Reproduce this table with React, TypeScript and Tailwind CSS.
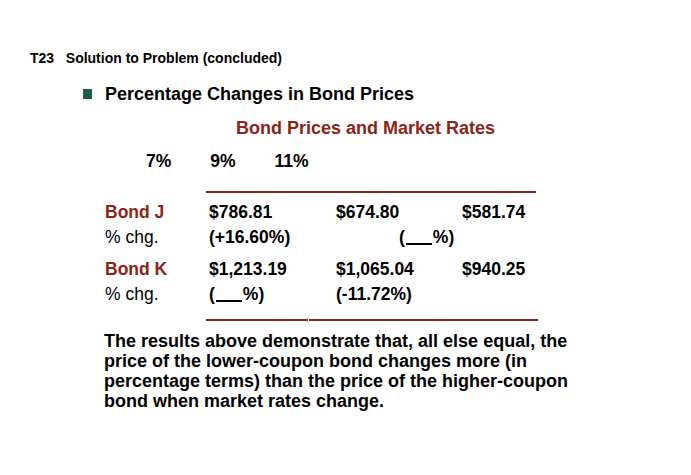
function Blank() {
  return <span className="inline-block w-[26px] h-[2px] bg-black align-[-2px] mx-[1px]" />;
}

export default function App() {
  const red = "text-[#8c2518]";
  return (
    <div className="w-[691px] h-[475px] bg-white text-black font-['Liberation_Sans',Arial,sans-serif] overflow-hidden">
      <div className="pt-[49px] pl-[30px] text-[14px] leading-[18px] font-bold whitespace-nowrap">
        T23&nbsp;&nbsp;&nbsp;Solution to Problem (concluded)
      </div>
      <div className="mt-[16px] pl-[83px] flex items-center h-[22px]">
        <div className="w-[9px] h-[10px] bg-[#1d5e4b]" />
        <div className="ml-[13px] text-[18px] leading-[22px] font-bold whitespace-nowrap">Percentage Changes in Bond Prices</div>
      </div>
      <div className={`mt-[13px] pl-[236px] text-[18px] leading-[20px] font-bold whitespace-nowrap ${red}`}>
        Bond Prices and Market Rates
      </div>
      <div className="mt-[13px] flex text-[17.5px] leading-[20px] font-bold">
        <span className="ml-[146px]">7%</span>
        <span className="ml-[39px]">9%</span>
        <span className="ml-[39px]">11%</span>
      </div>
      <div className="mt-[20px] ml-[206px] w-[330px] h-[2px] bg-[#8c2518]" />
      <div className="mt-[7px] pl-[105px] grid grid-cols-[104px_127px_126px_1fr] text-[17.5px] leading-[25px] whitespace-nowrap">
        <span className={`font-bold ${red}`}>Bond J</span>
        <span className="font-bold">$786.81</span>
        <span className="font-bold">$674.80</span>
        <span className="font-bold">$581.74</span>
        <span>% chg.</span>
        <span className="font-bold">(+16.60%)</span>
        <span className="font-bold col-span-2 pl-[63px]">(<Blank />%)</span>
      </div>
      <div className="mt-[7px] pl-[105px] grid grid-cols-[104px_127px_126px_1fr] text-[17.5px] leading-[25px] whitespace-nowrap">
        <span className={`font-bold ${red}`}>Bond K</span>
        <span className="font-bold">$1,213.19</span>
        <span className="font-bold">$1,065.04</span>
        <span className="font-bold">$940.25</span>
        <span>% chg.</span>
        <span className="font-bold">(<Blank />%)</span>
        <span className="font-bold">(-11.72%)</span>
        <span />
      </div>
      <div className="mt-[12px] ml-[206px] flex h-[2px]">
        <div className="w-[102px] bg-[#8c2518]" />
        <div className="w-[1px]" />
        <div className="w-[229px] bg-[#8c2518]" />
      </div>
      <p className="mt-[10px] pl-[104px] text-[18px] leading-[20px] font-bold whitespace-nowrap">
        The results above demonstrate that, all else equal, the<br />
        price of the lower-coupon bond changes more (in<br />
        percentage terms) than the price of the higher-coupon<br />
        bond when market rates change.
      </p>
    </div>
  );
}
